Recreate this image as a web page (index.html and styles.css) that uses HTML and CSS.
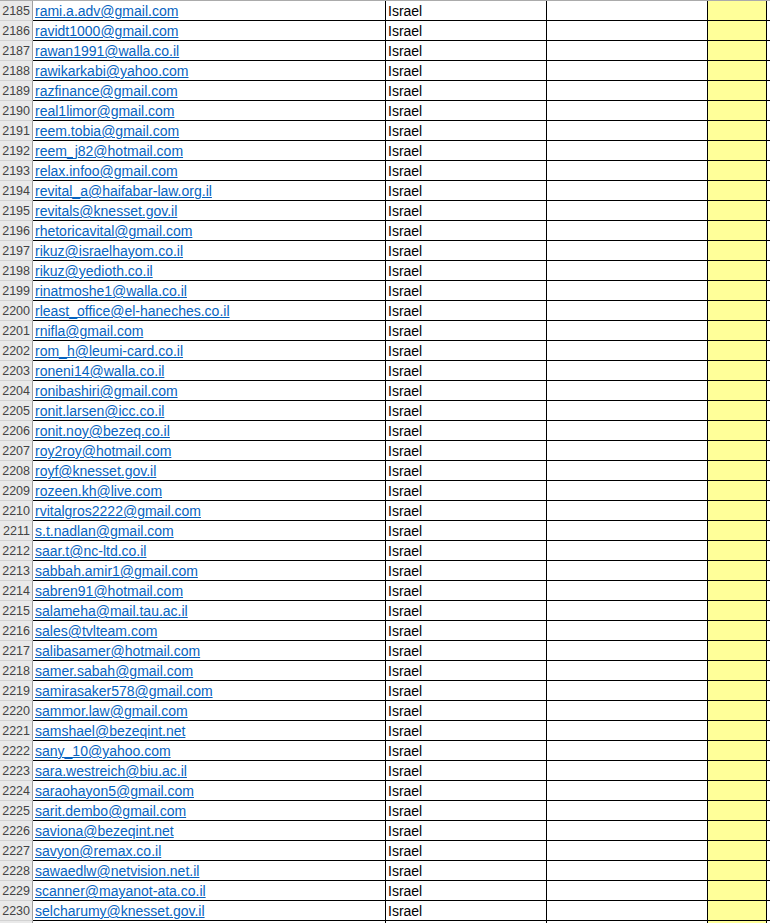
FILE: index.html
```html
<!DOCTYPE html>
<html>
<head>
<meta charset="utf-8">
<link rel="stylesheet" href="styles.css">
</head>
<body>
<div class="sheet">
<div class="row"><div class="rh">2185</div><div class="c a"><a>rami.a.adv@gmail.com</a></div><div class="c b">Israel</div><div class="c"></div><div class="c y"></div><div class="c r"></div></div>
<div class="row"><div class="rh">2186</div><div class="c a"><a>ravidt1000@gmail.com</a></div><div class="c b">Israel</div><div class="c"></div><div class="c y"></div><div class="c r"></div></div>
<div class="row"><div class="rh">2187</div><div class="c a"><a>rawan1991@walla.co.il</a></div><div class="c b">Israel</div><div class="c"></div><div class="c y"></div><div class="c r"></div></div>
<div class="row"><div class="rh">2188</div><div class="c a"><a>rawikarkabi@yahoo.com</a></div><div class="c b">Israel</div><div class="c"></div><div class="c y"></div><div class="c r"></div></div>
<div class="row"><div class="rh">2189</div><div class="c a"><a>razfinance@gmail.com</a></div><div class="c b">Israel</div><div class="c"></div><div class="c y"></div><div class="c r"></div></div>
<div class="row"><div class="rh">2190</div><div class="c a"><a>real1limor@gmail.com</a></div><div class="c b">Israel</div><div class="c"></div><div class="c y"></div><div class="c r"></div></div>
<div class="row"><div class="rh">2191</div><div class="c a"><a>reem.tobia@gmail.com</a></div><div class="c b">Israel</div><div class="c"></div><div class="c y"></div><div class="c r"></div></div>
<div class="row"><div class="rh">2192</div><div class="c a"><a>reem_j82@hotmail.com</a></div><div class="c b">Israel</div><div class="c"></div><div class="c y"></div><div class="c r"></div></div>
<div class="row"><div class="rh">2193</div><div class="c a"><a>relax.infoo@gmail.com</a></div><div class="c b">Israel</div><div class="c"></div><div class="c y"></div><div class="c r"></div></div>
<div class="row"><div class="rh">2194</div><div class="c a"><a>revital_a@haifabar-law.org.il</a></div><div class="c b">Israel</div><div class="c"></div><div class="c y"></div><div class="c r"></div></div>
<div class="row"><div class="rh">2195</div><div class="c a"><a>revitals@knesset.gov.il</a></div><div class="c b">Israel</div><div class="c"></div><div class="c y"></div><div class="c r"></div></div>
<div class="row"><div class="rh">2196</div><div class="c a"><a>rhetoricavital@gmail.com</a></div><div class="c b">Israel</div><div class="c"></div><div class="c y"></div><div class="c r"></div></div>
<div class="row"><div class="rh">2197</div><div class="c a"><a>rikuz@israelhayom.co.il</a></div><div class="c b">Israel</div><div class="c"></div><div class="c y"></div><div class="c r"></div></div>
<div class="row"><div class="rh">2198</div><div class="c a"><a>rikuz@yedioth.co.il</a></div><div class="c b">Israel</div><div class="c"></div><div class="c y"></div><div class="c r"></div></div>
<div class="row"><div class="rh">2199</div><div class="c a"><a>rinatmoshe1@walla.co.il</a></div><div class="c b">Israel</div><div class="c"></div><div class="c y"></div><div class="c r"></div></div>
<div class="row"><div class="rh">2200</div><div class="c a"><a>rleast_office@el-haneches.co.il</a></div><div class="c b">Israel</div><div class="c"></div><div class="c y"></div><div class="c r"></div></div>
<div class="row"><div class="rh">2201</div><div class="c a"><a>rnifla@gmail.com</a></div><div class="c b">Israel</div><div class="c"></div><div class="c y"></div><div class="c r"></div></div>
<div class="row"><div class="rh">2202</div><div class="c a"><a>rom_h@leumi-card.co.il</a></div><div class="c b">Israel</div><div class="c"></div><div class="c y"></div><div class="c r"></div></div>
<div class="row"><div class="rh">2203</div><div class="c a"><a>roneni14@walla.co.il</a></div><div class="c b">Israel</div><div class="c"></div><div class="c y"></div><div class="c r"></div></div>
<div class="row"><div class="rh">2204</div><div class="c a"><a>ronibashiri@gmail.com</a></div><div class="c b">Israel</div><div class="c"></div><div class="c y"></div><div class="c r"></div></div>
<div class="row"><div class="rh">2205</div><div class="c a"><a>ronit.larsen@icc.co.il</a></div><div class="c b">Israel</div><div class="c"></div><div class="c y"></div><div class="c r"></div></div>
<div class="row"><div class="rh">2206</div><div class="c a"><a>ronit.noy@bezeq.co.il</a></div><div class="c b">Israel</div><div class="c"></div><div class="c y"></div><div class="c r"></div></div>
<div class="row"><div class="rh">2207</div><div class="c a"><a>roy2roy@hotmail.com</a></div><div class="c b">Israel</div><div class="c"></div><div class="c y"></div><div class="c r"></div></div>
<div class="row"><div class="rh">2208</div><div class="c a"><a>royf@knesset.gov.il</a></div><div class="c b">Israel</div><div class="c"></div><div class="c y"></div><div class="c r"></div></div>
<div class="row"><div class="rh">2209</div><div class="c a"><a>rozeen.kh@live.com</a></div><div class="c b">Israel</div><div class="c"></div><div class="c y"></div><div class="c r"></div></div>
<div class="row"><div class="rh">2210</div><div class="c a"><a>rvitalgros2222@gmail.com</a></div><div class="c b">Israel</div><div class="c"></div><div class="c y"></div><div class="c r"></div></div>
<div class="row"><div class="rh">2211</div><div class="c a"><a>s.t.nadlan@gmail.com</a></div><div class="c b">Israel</div><div class="c"></div><div class="c y"></div><div class="c r"></div></div>
<div class="row"><div class="rh">2212</div><div class="c a"><a>saar.t@nc-ltd.co.il</a></div><div class="c b">Israel</div><div class="c"></div><div class="c y"></div><div class="c r"></div></div>
<div class="row"><div class="rh">2213</div><div class="c a"><a>sabbah.amir1@gmail.com</a></div><div class="c b">Israel</div><div class="c"></div><div class="c y"></div><div class="c r"></div></div>
<div class="row"><div class="rh">2214</div><div class="c a"><a>sabren91@hotmail.com</a></div><div class="c b">Israel</div><div class="c"></div><div class="c y"></div><div class="c r"></div></div>
<div class="row"><div class="rh">2215</div><div class="c a"><a>salameha@mail.tau.ac.il</a></div><div class="c b">Israel</div><div class="c"></div><div class="c y"></div><div class="c r"></div></div>
<div class="row"><div class="rh">2216</div><div class="c a"><a>sales@tvlteam.com</a></div><div class="c b">Israel</div><div class="c"></div><div class="c y"></div><div class="c r"></div></div>
<div class="row"><div class="rh">2217</div><div class="c a"><a>salibasamer@hotmail.com</a></div><div class="c b">Israel</div><div class="c"></div><div class="c y"></div><div class="c r"></div></div>
<div class="row"><div class="rh">2218</div><div class="c a"><a>samer.sabah@gmail.com</a></div><div class="c b">Israel</div><div class="c"></div><div class="c y"></div><div class="c r"></div></div>
<div class="row"><div class="rh">2219</div><div class="c a"><a>samirasaker578@gmail.com</a></div><div class="c b">Israel</div><div class="c"></div><div class="c y"></div><div class="c r"></div></div>
<div class="row"><div class="rh">2220</div><div class="c a"><a>sammor.law@gmail.com</a></div><div class="c b">Israel</div><div class="c"></div><div class="c y"></div><div class="c r"></div></div>
<div class="row"><div class="rh">2221</div><div class="c a"><a>samshael@bezeqint.net</a></div><div class="c b">Israel</div><div class="c"></div><div class="c y"></div><div class="c r"></div></div>
<div class="row"><div class="rh">2222</div><div class="c a"><a>sany_10@yahoo.com</a></div><div class="c b">Israel</div><div class="c"></div><div class="c y"></div><div class="c r"></div></div>
<div class="row"><div class="rh">2223</div><div class="c a"><a>sara.westreich@biu.ac.il</a></div><div class="c b">Israel</div><div class="c"></div><div class="c y"></div><div class="c r"></div></div>
<div class="row"><div class="rh">2224</div><div class="c a"><a>saraohayon5@gmail.com</a></div><div class="c b">Israel</div><div class="c"></div><div class="c y"></div><div class="c r"></div></div>
<div class="row"><div class="rh">2225</div><div class="c a"><a>sarit.dembo@gmail.com</a></div><div class="c b">Israel</div><div class="c"></div><div class="c y"></div><div class="c r"></div></div>
<div class="row"><div class="rh">2226</div><div class="c a"><a>saviona@bezeqint.net</a></div><div class="c b">Israel</div><div class="c"></div><div class="c y"></div><div class="c r"></div></div>
<div class="row"><div class="rh">2227</div><div class="c a"><a>savyon@remax.co.il</a></div><div class="c b">Israel</div><div class="c"></div><div class="c y"></div><div class="c r"></div></div>
<div class="row"><div class="rh">2228</div><div class="c a"><a>sawaedlw@netvision.net.il</a></div><div class="c b">Israel</div><div class="c"></div><div class="c y"></div><div class="c r"></div></div>
<div class="row"><div class="rh">2229</div><div class="c a"><a>scanner@mayanot-ata.co.il</a></div><div class="c b">Israel</div><div class="c"></div><div class="c y"></div><div class="c r"></div></div>
<div class="row"><div class="rh">2230</div><div class="c a"><a>selcharumy@knesset.gov.il</a></div><div class="c b">Israel</div><div class="c"></div><div class="c y"></div><div class="c r"></div></div>
<div class="row"><div class="rh"></div><div class="c a"></div><div class="c b"></div><div class="c"></div><div class="c y"></div><div class="c r"></div></div>
</div>
</body>
</html>
```
FILE: styles.css
```css
html, body {
  margin: 0;
  padding: 0;
  background: #ffffff;
  overflow: hidden;
}
.sheet {
  width: 770px;
  height: 923px;
  overflow: hidden;
  border-top: 1px solid #ababab;
  font-family: "Liberation Sans", Arial, sans-serif;
  font-size: 14px;
}
.row {
  display: grid;
  grid-template-columns: 33px 353px 161px 161px 59px 1fr;
  height: 20px;
}
.rh {
  background: #e9e9e9;
  border-right: 1px solid #9f9f9f;
  border-bottom: 1px solid #d2d2d2;
  color: #444444;
  font-size: 12.5px;
  text-align: right;
  padding: 1px 2px 0 0;
  line-height: 18px;
  white-space: nowrap;
}
.c {
  border-right: 1px solid #000;
  border-bottom: 1px solid #000;
  padding: 1px 0 0 2px;
  line-height: 18px;
  white-space: nowrap;
  overflow: hidden;
}
.c.r {
  border-right: none;
}
.a a {
  color: #0563c1;
  text-decoration: underline;
}
.b {
  color: #000;
}
.y {
  background: #ffff99;
}
```
